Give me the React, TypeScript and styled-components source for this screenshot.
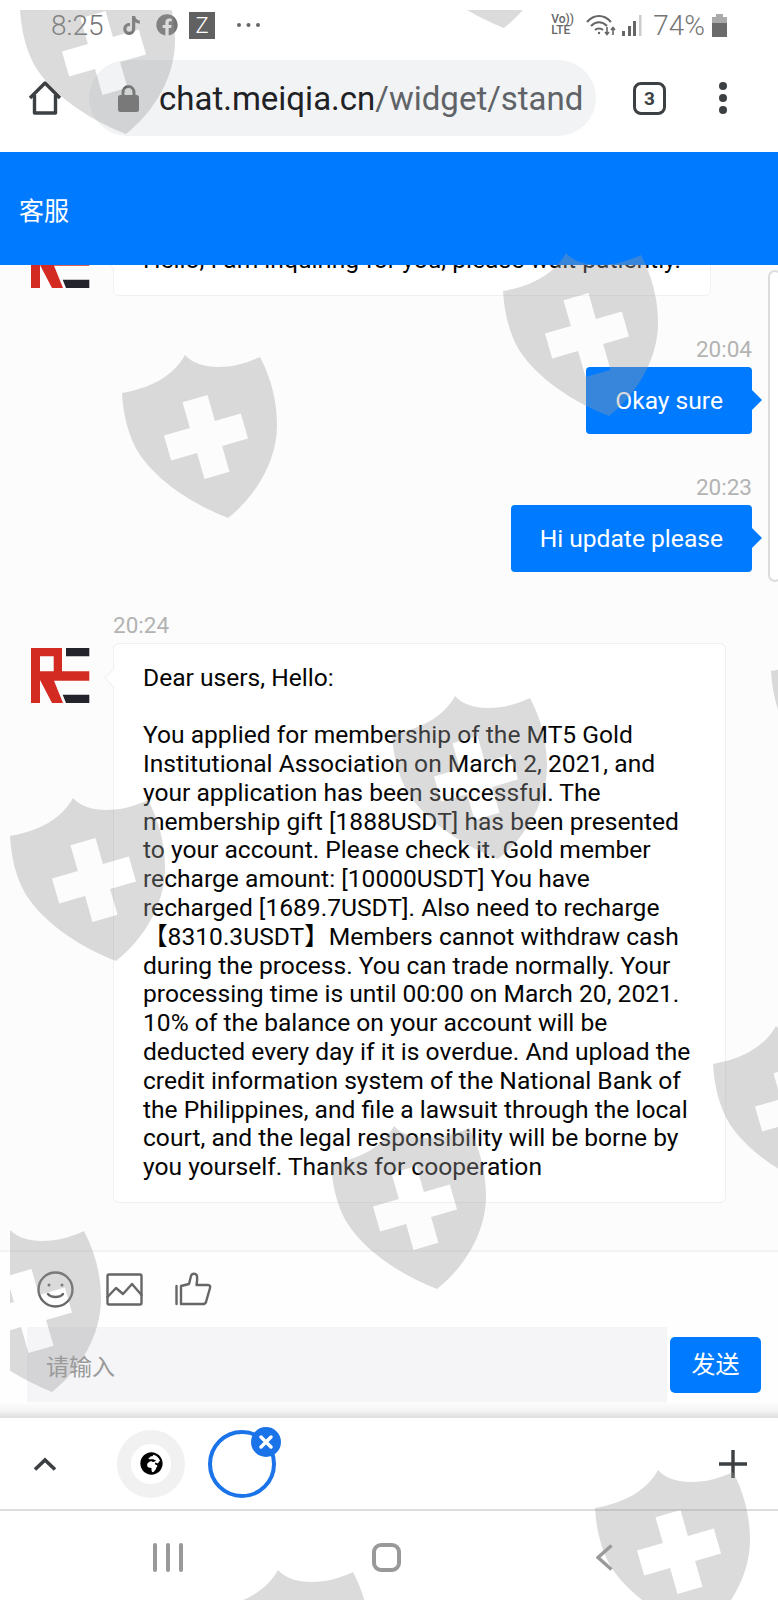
import React from 'react';
import styled, { createGlobalStyle } from 'styled-components';
import { FaTiktok, FaFacebook, FaGlobeAfrica } from 'react-icons/fa';

const GlobalStyle = createGlobalStyle`
  html, body {
    margin: 0;
    padding: 0;
    background: #fff;
    font-family: Roboto, "Noto Sans CJK SC", sans-serif;
  }
`;

const Page = styled.div`
  position: relative;
  width: 778px;
  height: 1600px;
  overflow: hidden;
  display: flex;
  flex-direction: column;
  background: #fff;
`;

/* watermark that the phone drew over everything */
const WatermarkLayer = styled.div`
  position: absolute;
  top: 10px;
  left: 10px;
  right: 0;
  bottom: 0;
  overflow: hidden;
  pointer-events: none;
  z-index: 10;
`;

const Shield = styled.svg<{ $x: number; $y: number }>`
  position: absolute;
  left: ${p => p.$x - 10}px;
  top: ${p => p.$y - 10}px;
  width: 155px;
  height: 163px;
`;

const StatusBar = styled.div`
  height: 50px;
  flex: none;
  display: flex;
  align-items: center;
  padding: 0 51px;
  color: #757575;
  font-size: 28px;
  font-weight: 300;
`;

const StatusTime = styled.span`
  width: 54px;
  margin-right: 17px;
`;

const StatusGlyph = styled.span<{ $size: number; $gap: number }>`
  display: flex;
  font-size: ${p => p.$size}px;
  margin-right: ${p => p.$gap}px;
`;

const ZBadge = styled.span`
  width: 26px;
  height: 27px;
  margin-right: 21px;
  background: #616161;
  color: #fff;
  font-size: 22px;
  line-height: 27px;
  text-align: center;
`;

const StatusRight = styled.div`
  margin-left: auto;
  display: flex;
  align-items: center;
`;

const VoLte = styled.span`
  width: 23px;
  margin-right: 12px;
  font-size: 12px;
  line-height: 11px;
  font-weight: 500;
  color: #666;
`;

const Percent = styled.span`
  margin: 0 7px 0 11px;
`;

const AddressBar = styled.div`
  height: 102px;
  flex: none;
  box-sizing: border-box;
  padding: 10px 0 16px 28px;
  display: flex;
  align-items: center;
`;

const UrlPill = styled.div`
  width: 507px;
  height: 76px;
  margin-left: 27px;
  padding-left: 29px;
  box-sizing: border-box;
  display: flex;
  align-items: center;
  gap: 20px;
  border-radius: 38px;
  background: #f1f3f4;
  font-size: 33px;
  white-space: nowrap;
  color: #202124;
`;

const UrlPath = styled.span`
  color: #5f6368;
`;

const TabCount = styled.div`
  width: 33px;
  height: 33px;
  margin-left: 37px;
  box-sizing: border-box;
  border: 3px solid #3c4043;
  border-radius: 8px;
  color: #3c4043;
  font-size: 19px;
  font-weight: 700;
  line-height: 27px;
  text-align: center;
`;

const MenuDots = styled.div`
  margin-left: 53px;
  display: flex;
  flex-direction: column;
  gap: 4px;

  span {
    width: 8px;
    height: 8px;
    border-radius: 50%;
    background: #3c4043;
  }
`;

const Header = styled.header`
  height: 113px;
  flex: none;
  padding-left: 19px;
  display: flex;
  align-items: center;
  background: #007aff;
  color: #fff;
  font-size: 25px;
  z-index: 2;
`;

const ChatArea = styled.main`
  height: 985px;
  flex: none;
  box-sizing: border-box;
  padding: 0 26px 47px 31px;
  display: flex;
  flex-direction: column;
  justify-content: flex-end;
  gap: 40px;
  overflow: hidden;
  background: #fcfcfc;
`;

const OutMessage = styled.div`
  flex: none;
  display: flex;
  flex-direction: column;
  align-items: flex-end;
`;

const InMessage = styled.div`
  flex: none;
  display: flex;
  align-items: flex-start;
  gap: 23px;
`;

const InBody = styled.div`
  display: flex;
  flex-direction: column;
  align-items: flex-start;
`;

const AvatarLogo = styled.svg<{ $offset: number }>`
  flex: none;
  width: 59px;
  height: 56px;
  margin-top: ${p => p.$offset}px;
`;

const TimeLabel = styled.div`
  font-size: 22.5px;
  line-height: 26px;
  margin-bottom: 5px;
  color: #b3b3b3;
`;

const OutBubble = styled.div`
  position: relative;
  box-sizing: border-box;
  height: 67px;
  padding: 19px 29px;
  border-radius: 4px;
  background: #007aff;
  color: #fff;
  font-size: 24.6px;
  line-height: 29px;

  &::after {
    content: '';
    position: absolute;
    right: -10px;
    top: 50%;
    margin-top: -10px;
    border-left: 10px solid #007aff;
    border-top: 10px solid transparent;
    border-bottom: 10px solid transparent;
  }
`;

const InBubble = styled.div`
  position: relative;
  box-sizing: border-box;
  max-width: 613px;
  padding: 20px 29px;
  border: 1px solid #f0f0f0;
  border-radius: 6px;
  background: #fff;
  color: #050505;
  font-size: 24.6px;
  line-height: 28.8px;
  white-space: pre-wrap;

  &::before {
    content: '';
    position: absolute;
    left: -7px;
    top: 27px;
    width: 13px;
    height: 13px;
    background: #fff;
    border-left: 1px solid #f0f0f0;
    border-bottom: 1px solid #f0f0f0;
    transform: rotate(45deg);
  }
`;

const ScrollHandle = styled.div`
  position: absolute;
  top: 270px;
  right: -4px;
  width: 10px;
  height: 308px;
  border: 2px solid #dcdcdc;
  border-radius: 8px;
  background: #fff;
`;

const Composer = styled.footer`
  height: 152px;
  flex: none;
  box-sizing: border-box;
  border-top: 2px solid #f2f2f2;
  padding-left: 27px;
  background: #fefefe;
`;

const Toolbar = styled.div`
  height: 75px;
  padding-left: 10px;
  display: flex;
  align-items: center;
  gap: 32px;
`;

const ToolIcon = styled.svg`
  width: 37px;
  height: 37px;
  fill: none;
  stroke: #666;
  stroke-width: 2.4;
  stroke-linejoin: round;
  stroke-linecap: round;
`;

const InputRow = styled.div`
  height: 75px;
  display: flex;
  align-items: center;
`;

const InputBox = styled.div`
  width: 640px;
  height: 75px;
  box-sizing: border-box;
  padding-left: 19px;
  display: flex;
  align-items: center;
  background: #f5f5f7;
  color: #999;
  font-size: 23px;
`;

const SendButton = styled.div`
  width: 91px;
  height: 56px;
  margin-left: 3px;
  border-radius: 5px;
  background: #007aff;
  color: #fff;
  font-size: 24px;
  line-height: 56px;
  text-align: center;
`;

const ShadeStrip = styled.div`
  height: 16px;
  flex: none;
  background: linear-gradient(to bottom, #fdfdfd 0%, #f5f5f5 50%, #dedede 100%);
`;

const TabBar = styled.div`
  height: 93px;
  flex: none;
  box-sizing: border-box;
  padding: 0 31px 0 33px;
  display: flex;
  align-items: center;
  border-bottom: 2px solid #ddd;
`;

const TabGlobe = styled.div`
  width: 68px;
  height: 68px;
  margin: 0 23px 0 60px;
  box-sizing: border-box;
  border: 14px solid #f1f1f1;
  border-radius: 50%;
  display: flex;
  align-items: center;
  justify-content: center;
  background: #fff;
  color: #000;
  font-size: 23px;
`;

const TabRing = styled.div`
  position: relative;
  width: 68px;
  height: 68px;
  box-sizing: border-box;
  border: 4px solid #1a73e8;
  border-radius: 50%;
`;

const CloseBadge = styled.div`
  position: absolute;
  top: -7px;
  left: 39px;
  width: 30px;
  height: 30px;
  border-radius: 50%;
  display: flex;
  align-items: center;
  justify-content: center;
  background: #1a73e8;
`;

const AddTab = styled.svg`
  margin-left: auto;
  width: 28px;
  height: 28px;
`;

const NavBar = styled.nav`
  height: 89px;
  flex: none;
  box-sizing: border-box;
  padding: 3px 0 0 59px;
  display: grid;
  grid-template-columns: repeat(3, 218px);
  align-items: center;
  justify-items: center;
`;

const NavLines = styled.div`
  display: flex;
  gap: 9px;

  span {
    width: 4px;
    height: 29px;
    border-radius: 2px;
    background: #999;
  }
`;

const NavHome = styled.div`
  width: 29px;
  height: 29px;
  box-sizing: border-box;
  border: 4px solid #999;
  border-radius: 9px;
`;

const shields: [number, number][] = [
  [20, -29], [398, -135], [503, 253], [122, 355], [771, 633], [392, 696], [10, 798],
  [713, 1026], [331, 1126], [-54, 1229], [595, 1470], [215, 1570],
];

const text = `Dear users, Hello:

You applied for membership of the MT5 Gold Institutional Association on March 2, 2021, and your application has been successful. The membership gift [1888USDT] has been presented to your account. Please check it. Gold member recharge amount: [10000USDT] You have recharged [1689.7USDT]. Also need to recharge 【8310.3USDT】Members cannot withdraw cash during the process. You can trade normally. Your processing time is until 00:00 on March 20, 2021. 10% of the balance on your account will be deducted every day if it is overdue. And upload the credit information system of the National Bank of the Philippines, and file a lawsuit through the local court, and the legal responsibility will be borne by you yourself. Thanks for cooperation`;

const Logo: React.FC<{ offset: number }> = ({ offset }) => (
  <AvatarLogo $offset={offset} viewBox="0 0 59 56">
    <path
      fill="#d32a22"
      fillRule="evenodd"
      d="M0 0H31V23.3H58.3V32.7H23L32 55H21L9 32V55H0ZM9 8.3H22.7V23.3H9Z"
    />
    <path fill="#23232b" d="M35 0H58.3V8.3H35ZM31.7 46.7H58.3V55H35Z" />
  </AvatarLogo>
);

const App: React.FC = () => {
  return (
    <Page>
      <GlobalStyle />

      <StatusBar>
        <StatusTime>8:25</StatusTime>
        <StatusGlyph $size={19} $gap={15}><FaTiktok /></StatusGlyph>
        <StatusGlyph $size={22} $gap={11}><FaFacebook /></StatusGlyph>
        <ZBadge>Z</ZBadge>
        <svg width="25" height="6" viewBox="0 0 25 6">
          <circle cx="3" cy="3" r="2" fill="#666" />
          <circle cx="12.5" cy="3" r="2" fill="#666" />
          <circle cx="22" cy="3" r="2" fill="#666" />
        </svg>
        <StatusRight>
          <VoLte>Vo))<br />LTE</VoLte>
          <svg width="31" height="22" viewBox="0 0 31 22" fill="none" stroke="#666" strokeWidth="2">
            <path d="M1 8C8 0 18 0 25 8" />
            <path d="M5 12C10 7 16 7 21 12" />
            <path d="M9 16C11 14 15 14 17 16" />
            <circle cx="13" cy="19" r="1.2" fill="#666" stroke="none" />
            <path d="M21 13V20M19 18L21 20.5L23 18" strokeWidth="1.6" />
            <path d="M27 21V14M25 16L27 13.5L29 16" strokeWidth="1.6" />
          </svg>
          <svg width="20" height="21" viewBox="0 0 20 21" style={{ marginLeft: 5 }}>
            <rect x="0" y="16" width="3" height="5" fill="#666" />
            <rect x="6" y="11" width="3" height="10" fill="#666" />
            <rect x="11" y="6" width="3" height="15" fill="#666" />
            <rect x="17" y="0" width="2.5" height="21" fill="#ccc" />
          </svg>
          <Percent>74%</Percent>
          <svg width="15" height="23" viewBox="0 0 15 23">
            <rect x="4" y="0" width="7" height="4" fill="#aaa" />
            <rect x="0" y="3" width="15" height="6" fill="#aaa" />
            <rect x="0" y="9" width="15" height="14" fill="#6b6b6b" />
          </svg>
        </StatusRight>
      </StatusBar>

      <AddressBar>
        <svg width="34" height="34" viewBox="0 0 34 34" fill="none" stroke="#3c4043" strokeWidth="3.4" strokeLinejoin="round">
          <path d="M2 17L17 2L32 17M6.5 14V32H27.5V14" />
        </svg>
        <UrlPill>
          <svg width="21" height="27" viewBox="0 0 21 27">
            <path d="M5 11V7.5C5 4 7.5 1.5 10.5 1.5S16 4 16 7.5V11" fill="none" stroke="#666" strokeWidth="3" />
            <rect x="0" y="10" width="21" height="17" rx="2.5" fill="#666" />
          </svg>
          <span>chat.meiqia.cn<UrlPath>/widget/stand</UrlPath></span>
        </UrlPill>
        <TabCount>3</TabCount>
        <MenuDots><span /><span /><span /></MenuDots>
      </AddressBar>

      <Header>客服</Header>

      <ChatArea>
        <InMessage>
          <Logo offset={8} />
          <InBody>
            <InBubble>Hello, I am inquiring for you, please wait patiently.</InBubble>
          </InBody>
        </InMessage>
        <OutMessage>
          <TimeLabel>20:04</TimeLabel>
          <OutBubble>Okay sure</OutBubble>
        </OutMessage>
        <OutMessage>
          <TimeLabel>20:23</TimeLabel>
          <OutBubble>Hi update please</OutBubble>
        </OutMessage>
        <InMessage>
          <Logo offset={36} />
          <InBody>
            <TimeLabel>20:24</TimeLabel>
            <InBubble>{text}</InBubble>
          </InBody>
        </InMessage>
      </ChatArea>

      <Composer>
        <Toolbar>
          <ToolIcon viewBox="0 0 37 37">
            <circle cx="18.5" cy="18.5" r="17" />
            <circle cx="12" cy="14" r="1.5" fill="#666" stroke="none" />
            <circle cx="25" cy="14" r="1.5" fill="#666" stroke="none" />
            <path d="M11 23C14 27 23 27 26 23" />
          </ToolIcon>
          <ToolIcon viewBox="0 0 37 37">
            <rect x="1.5" y="3.5" width="34" height="30" rx="1.5" />
            <path d="M1.5 26L10 17L17 23L26 13L35.5 24" />
          </ToolIcon>
          <ToolIcon viewBox="0 0 37 37">
            <path d="M1.5 15V33" />
            <path d="M6 15L14 13L16 5C17 2 21 2 22 5C22.5 8 22 11 21.5 14H33C35 14 35.5 15.5 35 17L31 31C30.5 32.5 29.5 33 28 33H6Z" />
          </ToolIcon>
        </Toolbar>
        <InputRow>
          <InputBox>请输入</InputBox>
          <SendButton>发送</SendButton>
        </InputRow>
      </Composer>

      <ShadeStrip />

      <TabBar>
        <svg width="24" height="14" viewBox="0 0 24 14" fill="none" stroke="#3c4043" strokeWidth="3.6">
          <path d="M2 12.5L12 3L22 12.5" />
        </svg>
        <TabGlobe><FaGlobeAfrica /></TabGlobe>
        <TabRing>
          <CloseBadge>
            <svg width="14" height="14" viewBox="0 0 14 14" stroke="#fff" strokeWidth="3.4" strokeLinecap="round">
              <path d="M2 2L12 12M12 2L2 12" />
            </svg>
          </CloseBadge>
        </TabRing>
        <AddTab viewBox="0 0 28 28" stroke="#3c4043" strokeWidth="3.4">
          <path d="M14 0V28M0 14H28" />
        </AddTab>
      </TabBar>

      <NavBar>
        <NavLines><span /><span /><span /></NavLines>
        <NavHome />
        <svg width="17" height="27" viewBox="0 0 17 27" fill="none" stroke="#999" strokeWidth="3.4">
          <path d="M15.5 1.5L2 13.5L15.5 25.5" />
        </svg>
      </NavBar>

      <ScrollHandle />

      <WatermarkLayer>
        {shields.map(([x, y]) => (
          <Shield key={`${x}-${y}`} $x={x} $y={y} viewBox="0 0 155 163">
            <path
              fill="rgba(155,155,155,0.36)"
              fillRule="evenodd"
              d="M63 0C70 8 82 12 96 12C112 12 125 8 138 2C150 25 155 48 155 70C155 105 135 140 106 163C60 145 22 115 10 85C4 70 1 55 0 38C30 33 52 20 63 0Z
                 M60.5 47.2L85.5 40L92.9 65.9L118.8 58.5L126 83.5L100.1 90.9L107.5 116.8L82.5 124L75.1 98.1L49.2 105.5L42 80.5L67.9 73.1Z"
            />
          </Shield>
        ))}
      </WatermarkLayer>
    </Page>
  );
};

export default App;
